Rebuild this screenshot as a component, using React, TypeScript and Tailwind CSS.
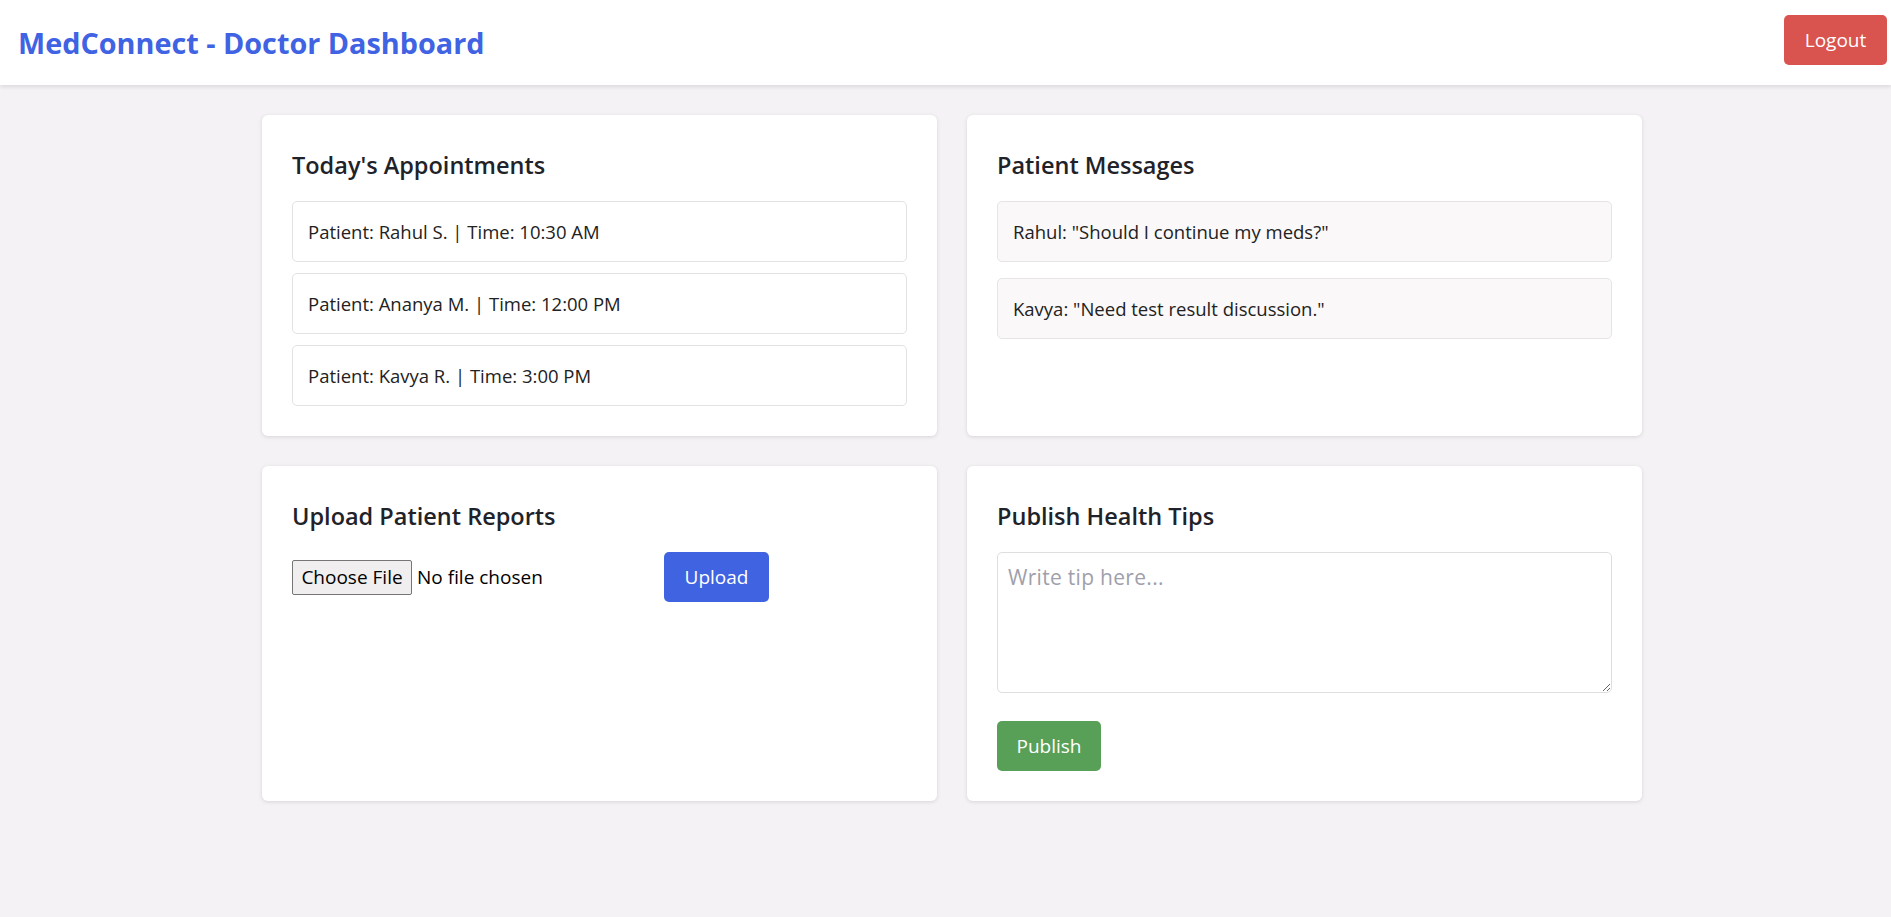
const appointments = [
  "Patient: Rahul S. | Time: 10:30 AM",
  "Patient: Ananya M. | Time: 12:00 PM",
  "Patient: Kavya R. | Time: 3:00 PM",
];

const messages = [
  'Rahul: "Should I continue my meds?"',
  'Kavya: "Need test result discussion."',
];

function Card({ title, children }: { title: string; children: React.ReactNode }) {
  return (
    <section className="rounded-[6px] bg-white p-[30px] shadow-[0_1px_4px_rgba(0,0,0,0.12)]">
      <h2 className="mt-[5px] mb-[20px] text-[23.5px] leading-[31px] font-semibold text-[#1f2329]">
        {title}
      </h2>
      {children}
    </section>
  );
}

export default function App() {
  return (
    <div className="min-h-screen bg-[#f4f2f5] font-['Segoe_UI','Open_Sans',sans-serif] text-[#222]">
      <header className="flex h-[85px] items-center justify-between bg-white pr-[4px] pl-[18px] shadow-[0_2px_4px_rgba(0,0,0,0.1)]">
        <h1 className="text-[28.8px] leading-[40px] font-bold text-[#3f63e3]">
          MedConnect - Doctor Dashboard
        </h1>
        <button className="mb-[5px] h-[50px] w-[103px] rounded-[5px] bg-[#d9534f] text-[19px] text-white">
          Logout
        </button>
      </header>

      <main className="pt-[30px] pb-[60px] pl-[13px]">
        <div className="mx-auto grid w-[1380px] grid-cols-2 gap-[30px]">
          <Card title="Today's Appointments">
            <ul className="flex flex-col gap-[11px]">
              {appointments.map((a) => (
                <li
                  key={a}
                  className="rounded-[5px] border border-[#e2e2e2] bg-white px-[15px] py-[15px] text-[18.5px] leading-[29px]"
                >
                  {a}
                </li>
              ))}
            </ul>
          </Card>

          <Card title="Patient Messages">
            <ul className="flex flex-col gap-[16px]">
              {messages.map((m) => (
                <li
                  key={m}
                  className="rounded-[5px] border border-[#e6e4e6] bg-[#faf8f9] px-[15px] py-[15px] text-[18.5px] leading-[29px]"
                >
                  {m}
                </li>
              ))}
            </ul>
          </Card>

          <Card title="Upload Patient Reports">
            <div className="flex items-center">
              <label className="flex w-[362px] items-center text-[19px] text-black">
                <input type="file" className="hidden" />
                <span className="flex h-[35px] w-[120px] items-center justify-center rounded-[2px] border border-[#767676] bg-[#f0eeee]">
                  Choose File
                </span>
                <span className="ml-[5px]">No file chosen</span>
              </label>
              <button className="ml-[10px] h-[50px] w-[105px] rounded-[5px] bg-[#4063e2] text-[19px] text-white">
                Upload
              </button>
            </div>
          </Card>

          <Card title="Publish Health Tips">
            <textarea
              placeholder="Write tip here..."
              className="block h-[141px] w-full rounded-[5px] border border-[#dedede] p-[10px] text-[21px] leading-[28px] tracking-[0.3px] outline-none placeholder:text-[#a09fab]"
            />
            <button className="mt-[28px] h-[50px] w-[104px] rounded-[5px] bg-[#58a058] text-[19px] text-white">
              Publish
            </button>
          </Card>
        </div>
      </main>
    </div>
  );
}
